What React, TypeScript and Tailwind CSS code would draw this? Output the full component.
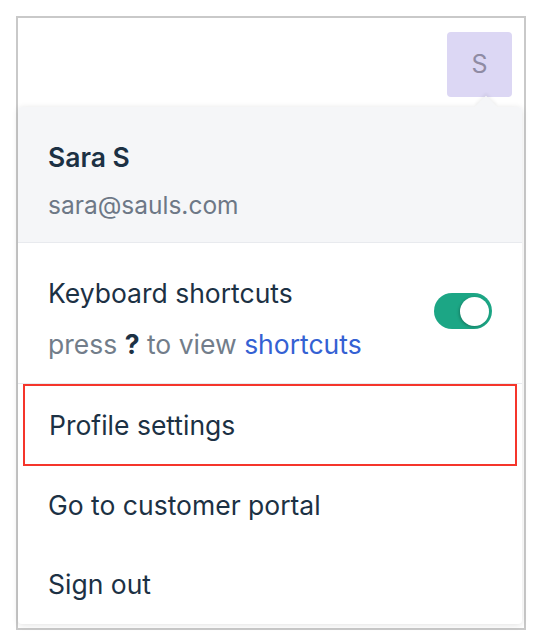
import React from "react";

export default function App() {
  return (
    <div className="w-[544px] h-[644px] bg-white pt-4 pl-4" style={{ fontFamily: "Inter, 'Noto Sans', sans-serif" }}>
      <div className="w-[510px] h-[614px] border-2 border-[#c9c9c9] bg-white flex flex-col">
        <div className="flex justify-end pt-[14px] pr-[12px]">
          <div className="w-[65px] h-[65px] rounded-[4px] bg-[#dcd7f4] flex items-center justify-center text-[25px] text-[#8f8ba3]">
            S
          </div>
        </div>
        <div className="relative mt-[10px] mr-[2px] rounded-[4px] bg-white shadow-[0_1px_6px_rgba(0,0,0,0.12)] flex flex-col">
          <div className="absolute -top-[8px] right-[28px] w-[16px] h-[16px] rotate-45 bg-[#f5f6f8] shadow-[-2px_-2px_3px_rgba(0,0,0,0.05)]" />
          <div className="relative h-[136px] bg-[#f5f6f8] rounded-t-[4px] border-b border-[#e8eaee] pl-[30px] pt-[32px]">
            <div className="text-[26.5px] font-semibold text-[#1c3144] leading-[36px]">Sara S</div>
            <div className="text-[24.5px] text-[#6d7886] leading-[32px] mt-[14px]">sara@sauls.com</div>
          </div>
          <div className="h-[141px] border-b border-[#e8eaee] flex items-center justify-between pl-[30px] pr-[30px]">
            <div className="pt-[10px]">
              <div className="text-[26.5px] text-[#1c3144] leading-[36px]">Keyboard shortcuts</div>
              <div className="text-[26.5px] text-[#727d8a] leading-[36px] mt-[15px]">
                press <span className="font-bold text-[#1c3144]">?</span> to view{" "}
                <span className="text-[#3461d3]">shortcuts</span>
              </div>
            </div>
            <div className="w-[58px] h-[36px] rounded-full bg-[#1ca685] flex items-center justify-end pr-[3px] mb-[4px]">
              <div className="w-[29px] h-[29px] rounded-full bg-white shadow-[-1px_1px_3px_rgba(0,0,0,0.25)]" />
            </div>
          </div>
          <div className="mx-[5px] h-[82px] border-2 border-[#f5352b] flex items-center pl-[24px] pt-[2px] text-[26.5px] text-[#1c3144]">
            Profile settings
          </div>
          <div className="h-[80px] flex items-center pl-[30px] text-[26.5px] text-[#1c3144]">Go to customer portal</div>
          <div className="h-[78px] flex items-center pl-[30px] text-[26.5px] text-[#1c3144]">Sign out</div>
        </div>
      </div>
    </div>
  );
}
